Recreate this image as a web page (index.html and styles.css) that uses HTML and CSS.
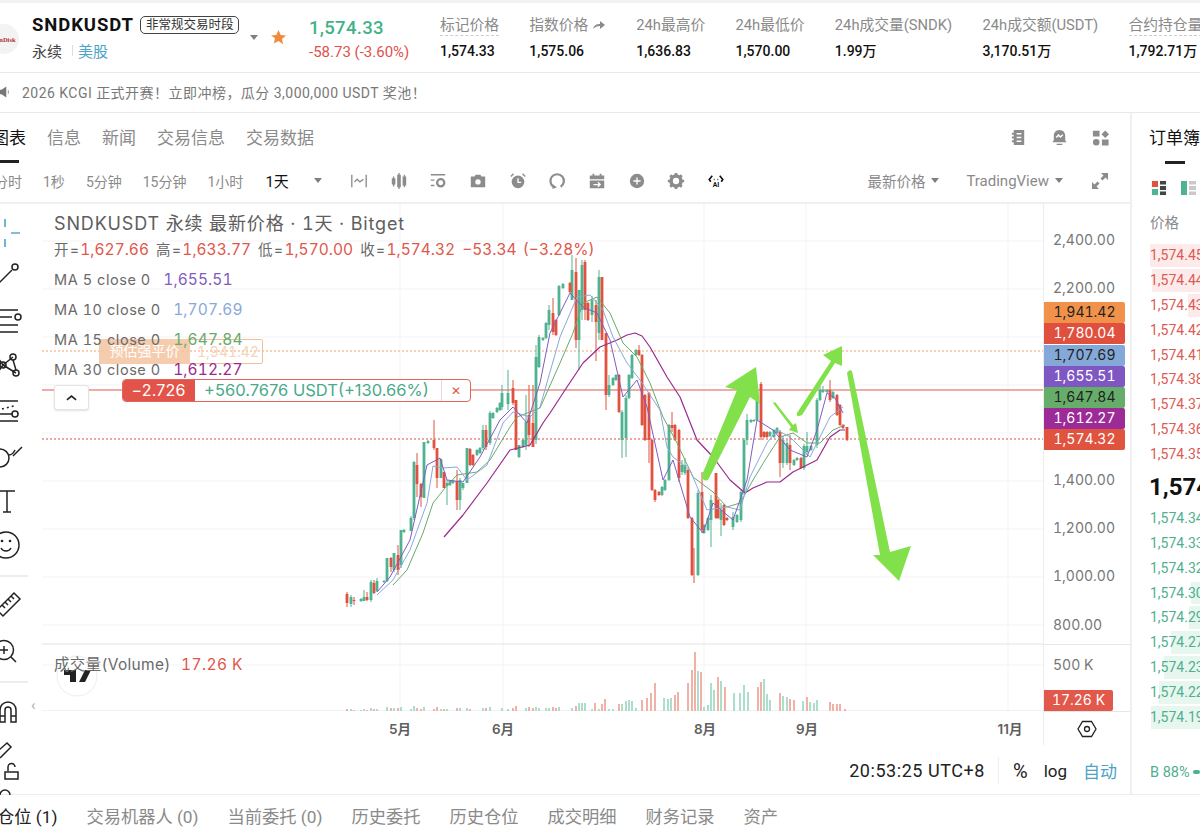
FILE: index.html
```html
<!DOCTYPE html>
<html lang="zh-CN">
<head>
<meta charset="utf-8">
<title>SNDKUSDT</title>
<link rel="stylesheet" href="styles.css">
</head>
<body>
<div class="page">
  <header class="ticker">
    <div class="logo"><span>SanDisk</span></div>
    <div class="symbol">
      <div class="symbol-top"><strong>SNDKUSDT</strong><span class="badge">非常规交易时段</span></div>
      <div class="symbol-sub"><span>永续</span><i></i><a>美股</a></div>
    </div>
    <span class="caret symbol-caret"></span>
    <svg class="star" viewBox="0 0 16 16"><path d="M8 0l2.3 5.2 5.7.6-4.3 3.7 1.3 5.6L8 11.6l-5 2.9 1.300-5.600L0 5.800l5.700-.6z"/></svg>
    <div class="last">
      <b>1,574.33</b>
      <span>-58.73 (-3.60%)</span>
    </div>
    <div class="stats">
      <div class="stat"><label class="dashed">标记价格</label><span>1,574.33</span></div>
      <div class="stat"><label>指数价格 <svg class="go" viewBox="0 0 14 10"><path d="M1 9c1-4 4-5 7-5V1l5 4-5 4V6C5 6 3 7 1 9z"/></svg></label><span>1,575.06</span></div>
      <div class="stat"><label>24h最高价</label><span>1,636.83</span></div>
      <div class="stat"><label>24h最低价</label><span>1,570.00</span></div>
      <div class="stat"><label>24h成交量(SNDK)</label><span>1.99万</span></div>
      <div class="stat"><label>24h成交额(USDT)</label><span>3,170.51万</span></div>
      <div class="stat"><label class="dashed">合约持仓量</label><span>1,792.71万</span></div>
    </div>
  </header>

  <div class="notice">
    <svg class="horn" viewBox="0 0 14 16"><path d="M-4 5h6l6-4v14l-6-4h-6z"/><path d="M10 5c1.500 1 1.500 5 0 6z"/></svg>
    <span>2026 KCGI 正式开赛！立即冲榜，瓜分 3,000,000 USDT 奖池！</span>
  </div>

  <div class="market">
    <section class="chart-col">
      <nav class="tabs">
        <a class="on">图表</a><a>信息</a><a>新闻</a><a>交易信息</a><a>交易数据</a>
        <div class="tab-icons">
          <svg viewBox="0 0 20 20"><path class="i-fill" d="M5 2h11v16H5zM3 5h3v2H3zM3 9h3v2H3zM3 13h3v2H3z"/><path class="i-cut" d="M8 6h5M8 10h5M8 14h5"/></svg>
          <svg viewBox="0 0 20 20"><path class="i-fill" d="M10 2c4 0 6 3 6 6v5l1.500 2h-15L4 13V8c0-3 2-6 6-6zM7 16.500h6V18H7z"/><path class="i-cut" d="M6.500 10l2.500-2.500 2 2 2.500-2.500"/></svg>
          <svg viewBox="0 0 20 20"><path class="i-fill" d="M2 3h7v6H2zM15 2.500l4 4-4 4-4-4zM5.500 11.500a3.500 3.500 0 1 1 0 7 3.500 3.500 0 0 1 0-7zM11.500 12h7v6.500h-7z"/></svg>
        </div>
      </nav>

      <div class="intervals">
        <a>分时</a><a>1秒</a><a>5分钟</a><a>15分钟</a><a>1小时</a><a class="on">1天</a>
        <span class="caret int-caret"></span>
        <div class="tools">
          <svg viewBox="0 0 20 20"><path class="i-line" d="M2 3v14M18 3v14M5 11l3-3 3 3 4-3"/></svg>
          <svg viewBox="0 0 20 20"><path class="i-fill" d="M2 7h4v7H2zM8 3h4v14H8zM14 5h4v10h-4z"/><path class="i-line" d="M4 5v11M10 1v18M16 3v14"/></svg>
          <svg viewBox="0 0 20 20"><path class="i-line" d="M2 3h16M2 9h4M2 15h4"/><circle class="i-ring" cx="13" cy="12" r="4"/></svg>
          <svg viewBox="0 0 20 20"><path class="i-fill" d="M2 5h4l1.500-2h5L14 5h4v12H2z"/><circle class="i-hole" cx="10" cy="11" r="3"/></svg>
          <svg viewBox="0 0 20 20"><circle class="i-fill" cx="10" cy="11" r="7"/><path class="i-cut" d="M10 7v4.500h3.500"/><path class="i-line" d="M2 5l3-3M18 5l-3-3"/></svg>
          <svg viewBox="0 0 20 20"><path class="i-line i-thick" d="M6.500 16.500A7.500 7.500 0 1 1 14 16.400"/><path class="i-fill" d="M5 13.500l5 3.500-5 2z"/></svg>
          <svg viewBox="0 0 20 20"><path class="i-fill" d="M2 4h16v4H2zM2 9.500h16V18H2zM5 2h2v3H5zM13 2h2v3h-2z"/><path class="i-cut" d="M6 14h7M11 11.500l2.500 2.500-2.500 2.500"/></svg>
          <svg viewBox="0 0 20 20"><circle class="i-fill" cx="10" cy="10" r="8"/><path class="i-cut" d="M6 10h8M10 6v8"/></svg>
          <svg viewBox="0 0 20 20"><circle class="i-gear" cx="10" cy="10" r="5.500"/><path class="i-teeth" d="M10 1v18M1 10h18M3.600 3.600l12.800 12.800M16.400 3.600L3.600 16.400"/></svg>
          <svg class="ai" viewBox="0 0 24 20"><path class="i-dark" d="M7 3L3 8l2 3M17 3l4 5-2 3M9 8h1M14 8h1"/><text x="12" y="18">AI</text></svg>
        </div>
        <div class="int-right">
          <a>最新价格</a><span class="caret"></span>
          <a class="tv">TradingView</a><span class="caret"></span>
          <svg class="expand" viewBox="0 0 20 20"><path class="i-fill" d="M11 2h7v7l-2.500-2.500-3 3-2-2 3-3zM9 18H2v-7l2.500 2.500 3-3 2 2-3 3z"/></svg>
        </div>
      </div>

      <div class="chart-body">
        <aside class="drawbar">
          <svg viewBox="0 204 42 591" width="42" height="591">
            <path class="t-blue" d="M5 219v8M5 239v8M-5 233H-1M11 233h9"/>
            <path class="t" d="M-1 283l13-13"/><circle class="t" cx="15" cy="267" r="3"/>
            <path class="t" d="M-2 310h20M-2 325h20M-2 332h20M-2 317h14"/><circle class="t" cx="18" cy="317" r="3"/>
            <path class="t" d="M-2 358l5 7M-2 372l5-7M3 365l10-8M3 365l13 8M13 360l3 10"/><circle class="t" cx="3" cy="365" r="3"/><circle class="t" cx="13" cy="357" r="3"/><circle class="t" cx="16" cy="373" r="3"/>
            <path class="t" d="M-2 401h20M-2 414h14M-2 421h20"/><path class="t t-dash" d="M2 409l12-3"/><circle class="t" cx="15" cy="414" r="3"/>
            <circle class="t" cx="0" cy="458" r="9"/><path class="t" d="M9 455c3 0 5-3 6-5M13 456l9-9"/>
            <path class="t" d="M-2 491h17M7 491v21M3 512h8"/>
            <circle class="t" cx="6" cy="545" r="13"/><circle class="t-dot" cx="2" cy="541" r="1.300"/><circle class="t-dot" cx="10" cy="541" r="1.300"/><path class="t" d="M1 548c2 4 8 4 10 0"/>
            <path class="t-soft" d="M0 576h28M0 682h28"/>
            <path class="t" d="M-3 610l17-17 6 6-17 17zM2 605l3 3M5 602l3 3M8 599l3 3M11 596l3 3"/>
            <circle class="t" cx="4" cy="650" r="9.500"/><path class="t" d="M0 650h8M4 646v8M11 657l5 5"/>
            <path class="t" d="M0 722v-12a8 8 0 0 1 16 0v12h-5v-12a3 3 0 0 0-6 0v12zM0 716h5M11 716h5"/>
            <path class="t" d="M-1 750l8-7 4 4-11 11M5 772h13v7H5z"/><path class="t" d="M8 771v-4a3.500 3.500 0 0 1 7 0"/>
            <path class="t" d="M0 795a5 5 0 0 1 10 0"/>
          </svg>
          <span class="hide-bar">‹</span>
        </aside>

        <div class="plot">
          <svg class="canvas" viewBox="42 204 1001 507" width="1001" height="507">
            <path class="grid" d="M42 241H1043M42 289H1043M42 337H1043M42 385H1043M42 433H1043M42 481H1043M42 529H1043M42 577H1043M42 625H1043M42 665H1043M400 204V711M503 204V711M704 204V711M806 204V711M1008 204V711"/>
            <path class="pane" d="M42 644H1043M42 711H1043"/>
            <path class="level-o" d="M42 351H1043"/>
            <path class="level-r" d="M42 390H1043"/>
            <path class="level-d" d="M42 439H1043"/>

            <path class="vol-g" d="M351 711v-2M361 711v-1M364 711v-2M371 711v-3M377 711v-2M387 711v-4M394 711v-3M401 711v-4M411 711v-2M414 711v-5M424 711v-4M441 711v-2M447 711v-2M460 711v-3M467 711v-3M483 711v-3M490 711v-4M502 711v-3M508 711v-2M526 711v-3M536 711v-4M539 711v-3M546 711v-3M549 711v-3M559 711v-4M572 711v-3M579 711v-8M582 711v-8M585 711v-8M592 711v-2M599 711v-2M609 711v-2M613 711v-2M622 711v-7M626 711v-10M629 711v-11M632 711v-10M636 711v-3M664 711v-13M668 711v-12M671 711v-13M698 711v-40M704 711v-4M708 711v-6M711 711v-28M714 711v-21M721 711v-30M734 711v-18M740 711v-18M744 711v-26M748 711v-19M764 711v-32M767 711v-17M770 711v-11M783 711v-15M787 711v-14M803 711v-10M810 711v-9M814 711v-8M817 711v-11"/>
            <path class="vol-r" d="M347 711v-2M354 711v-1M367 711v-1M374 711v-2M391 711v-3M398 711v-3M417 711v-3M421 711v-2M434 711v-2M437 711v-4M444 711v-2M457 711v-3M470 711v-2M486 711v-3M513 711v-3M516 711v-5M529 711v-4M533 711v-3M553 711v-4M556 711v-3M576 711v-5M595 711v-8M602 711v-7M605 711v-12M619 711v-7M642 711v-11M647 711v-13M651 711v-18M655 711v-28M675 711v-16M678 711v-19M688 711v-28M692 711v-41M695 711v-59M701 711v-39M718 711v-34M725 711v-24M758 711v-24M761 711v-29M780 711v-18M790 711v-12M794 711v-11M807 711v-14M830 711v-9M833 711v-7M837 711v-7M840 711v-7M845 711v-2"/>

            <path class="wick-g" d="M351 595V607M361 598V602M364 590V601M371 580V602M377 578V592M384 580V583M387 558V582M394 553V572M401 530V568M404 529V533M411 516V531M414 461V520M424 442V498M428 440V444M441 459V478M447 480V505M450 480V486M453 480V484M460 478V510M463 483V490M467 448V483M477 449V456M480 447V454M483 425V450M490 411V445M493 412V419M497 407V413M500 402V411M502 385V410M508 370V410M519 445V458M523 439V448M526 395V450M536 345V444M539 335V368M543 337V341M546 322V339M549 305V330M559 285V316M563 283V289M572 255V300M579 290V370M582 260V320M592 296V322M599 270V340M609 375V397M613 377V386M616 374V381M622 410V458M626 395V457M629 374V399M632 354V379M636 349V356M662 486V496M665 479V491M669 424V481M682 460V475M685 458V475M698 490V576M704 524V534M708 517V531M711 495V547M721 503V536M733 512V530M737 514V523M741 490V522M744 438V495M747 414V445M751 419V423M754 419V422M757 399V421M770 431V437M774 429V438M777 427V434M783 436V468M787 440V465M794 459V466M797 457V461M804 444V470M807 432V455M811 445V451M817 398V448M820 386V401M823 386V393M827 389V393M833 391V399"/>
            <path class="body-g" d="M351 597V604M361 599V601M364 597V601M371 582V600M377 581V591M384 581V582M387 558V581M394 553V570M401 530V565M404 530V532M411 518V531M414 462V518M424 442V498M428 441V443M441 459V478M447 483V486M450 481V485M453 481V483M460 480V500M463 483V488M467 448V483M477 450V455M480 448V453M483 430V448M490 413V443M493 413V418M497 408V412M500 403V410M502 393V407M508 393V404M519 445V457M523 440V447M526 422V445M536 357V440M539 337V367M543 338V340M546 323V338M549 310V325M559 286V315M563 284V288M572 270V300M579 290V340M582 265V310M592 300V315M599 277V333M609 385V395M613 378V385M616 375V380M622 412V440M626 398V438M629 375V398M632 355V378M636 350V355M662 487V495M665 480V490M669 425V480M682 465V472M685 465V473M698 493V575M704 525V533M708 518V530M711 500V520M721 510V520M733 517V527M737 515V522M741 492V520M744 440V492M747 420V440M751 420V422M754 420V421M757 400V420M770 432V436M774 430V437M777 428V433M783 440V463M787 443V463M794 460V465M797 458V460M804 446V468M807 446V452M811 446V450M817 400V445M820 390V400M823 390V392M827 390V392M833 392V398"/>
            <path class="wick-r" d="M347 592V607M354 597V605M367 592V601M374 580V594M391 557V572M398 545V575M417 453V497M421 483V507M434 420V450M437 448V488M444 472V488M457 470V510M470 448V466M473 454V466M486 425V450M513 380V405M516 400V450M529 385V447M533 385V447M553 298V335M556 319V336M570 282V293M576 258V348M585 260V320M588 302V321M596 300V361M602 277V340M606 333V410M619 374V413M639 345V356M642 354V426M645 394V441M649 392V463M652 439V491M655 489V502M659 491V496M672 412V432M675 424V441M679 429V482M688 469V519M692 517V576M694 548V583M702 472V533M716 473V519M718 499V519M724 504V526M727 517V521M761 382V440M764 431V438M767 431V438M780 430V477M790 435V470M801 457V469M830 380V402M837 394V416M840 404V426M843 424V429M847 427V441"/>
            <path class="body-r" d="M347 594V603M354 600V601M367 597V600M374 583V593M391 558V567M398 555V570M417 465V484M421 484V497M434 440V448M437 448V478M444 472V488M457 481V500M470 449V465M473 455V465M486 430V447M513 388V403M516 400V450M529 415V435M533 423V447M553 313V332M556 320V335M570 283V292M576 272V340M585 262V310M588 303V320M596 305V322M602 277V340M606 333V395M619 375V412M639 350V355M642 355V425M645 395V440M649 393V440M652 440V490M655 490V500M659 492V495M672 425V428M675 425V440M679 430V478M688 470V518M692 518V575M702 492V530M716 473V518M718 500V518M724 505V525M727 518V520M761 384V437M764 432V437M767 432V437M780 432V463M790 445V463M801 458V468M830 390V400M837 395V415M840 405V425M843 425V428M847 427V440"/>

            <path class="ma ma30" d="M444 537L463 515L487 483L510 450L530 445L543 423L550 413L567 387L583 363L600 347L617 340L627 335L635 333L642 336L650 347L667 377L680 397L697 440L713 457L730 480L745 493L753 488L767 482L780 482L793 472L817 460L830 437L840 430L845 430"/>
            <path class="ma ma15" d="M393 585L407 570L423 533L433 503L445 488L457 475L477 472L490 460L510 427L517 417L540 408L560 363L573 333L583 303L597 297L610 313L623 343L637 357L650 383L663 417L677 443L693 477L713 492L727 507L740 503L753 480L767 457L780 437L793 433L807 443L820 443L833 430L845 425"/>
            <path class="ma ma10" d="M377 595L393 580L410 550L427 503L433 466L443 468L457 467L467 480L487 465L503 423L513 412L530 417L540 407L560 337L577 297L590 295L603 310L613 337L627 363L640 380L660 410L667 447L673 457L690 470L707 510L727 507L740 510L750 477L767 443L777 430L790 437L810 457L830 417L843 407"/>
            <path class="ma ma5" d="M377 592L390 577L410 540L427 465L440 458L447 480L463 482L480 457L500 420L513 407L527 423L540 383L550 333L570 293L583 307L597 313L610 340L623 397L637 380L647 407L663 480L673 460L690 517L703 533L713 503L733 520L747 480L757 420L773 430L790 450L807 457L817 430L827 393L835 398L843 413"/>

            <path class="pen" d="M702 475L737 390L725 387L756 367L760 404L750 397L708 480Q702 482 702 475Z"/>
            <path class="pen" d="M797 413L831 361L823 355L842 346L842 366L835 363L802 415Q796 418 797 413Z"/>
            <path class="pen" d="M773 403L775 402L793 425L796 423L798 433L789 430L791 427Z"/>
            <path class="pen" d="M847 373Q849 369 852 371L890 552L911 546L899 581L873 555L880 555Z"/>

            <circle class="tv-ring" cx="77" cy="676" r="20"/>
            <path class="tv-mark" d="M64 670H76V682H70V675H64ZM85 670H91L85 682H79Z"/>
          </svg>

          <div class="liq"><span class="liq-l">预估强平价</span><span class="liq-v">1,941.42</span></div>

          <div class="legend">
            <div class="l-title">SNDKUSDT 永续 最新价格 · 1天 · Bitget</div>
            <div class="l-ohlc">开=<em>1,627.66</em> 高=<em>1,633.77</em> 低=<em>1,570.00</em> 收=<em>1,574.32</em> <em>−53.34 (−3.28%)</em></div>
            <div class="l-ma">MA 5 close 0 <span class="c5">1,655.51</span></div>
            <div class="l-ma">MA 10 close 0 <span class="c10">1,707.69</span></div>
            <div class="l-ma">MA 15 close 0 <span class="c15">1,647.84</span></div>
            <div class="l-ma">MA 30 close 0 <span class="c30">1,612.27</span></div>
          </div>

          <div class="pos"><b>−2.726</b><span class="pos-pnl">+560.7676 USDT(+130.66%)</span><span class="pos-x">✕</span></div>
          <button class="collapse"><svg viewBox="0 0 12 8"><path d="M1 6l5-4 5 4"/></svg></button>
          <div class="vol-legend">成交量(Volume) <em>17.26 K</em></div>
        </div>

        <div class="price-axis">
          <span class="p" style="top:36px">2,400.00</span>
          <span class="p" style="top:84px">2,200.00</span>
          <span class="p" style="top:276px">1,400.00</span>
          <span class="p" style="top:324px">1,200.00</span>
          <span class="p" style="top:372px">1,000.00</span>
          <span class="p" style="top:421px">800.00</span>
          <span class="p" style="top:461px">500 K</span>
          <span class="tag t-or" style="top:98px">1,941.42</span>
          <span class="tag t-re" style="top:119px">1,780.04</span>
          <span class="tag t-bl" style="top:141px">1,707.69</span>
          <span class="tag t-pu" style="top:162px">1,655.51</span>
          <span class="tag t-gr" style="top:183px">1,647.84</span>
          <span class="tag t-ma" style="top:204px">1,612.27</span>
          <span class="tag t-la" style="top:225px">1,574.32</span>
          <span class="tag t-vo" style="top:486px">17.26 K</span>
          <i class="axis-line l1"></i><i class="axis-line l2"></i>
          <svg class="hex" viewBox="0 0 20 20"><path d="M5.500 2.500h9L19 10l-4.500 7.500h-9L1 10z"/><circle cx="10" cy="10" r="2.500"/></svg>
        </div>

        <div class="time-axis">
          <span style="left:358px">5月</span>
          <span style="left:461px">6月</span>
          <span style="left:663px">8月</span>
          <span style="left:765px">9月</span>
          <span style="left:968px">11月</span>
        </div>
      </div>

      <footer class="chart-foot">
        <span class="clock">20:53:25 UTC+8</span><i></i><a class="pct">%</a><a>log</a><a class="auto">自动</a>
      </footer>
    </section>

    <aside class="book">
      <div class="book-head">订单簿</div>
      <div class="book-bar"></div>
      <div class="book-modes">
        <svg viewBox="0 0 16 16"><rect class="m-bg" width="16" height="16" rx="2"/><path class="m-r" d="M1 1h6v6H1z"/><path class="m-g" d="M1 9h6v6H1z"/><path class="m-k" d="M9 1h6v3.500H9zM9 6h6v4H9zM9 11.500h6V15H9z"/></svg>
        <svg viewBox="0 0 16 16"><path class="m-g" d="M1 1h6v14H1z"/><path class="m-s" d="M9 1h7v3.500H9zM9 6h7v4H9zM9 11.500h7V15H9z"/></svg>
      </div>
      <div class="book-label">价格</div>
      <div class="rows asks">
        <div class="row"><i style="width:51px"></i><span>1,574.45</span></div>
        <div class="row"><i style="width:49px"></i><span>1,574.44</span></div>
        <div class="row"><i style="width:13px"></i><span>1,574.43</span></div>
        <div class="row"><span>1,574.42</span></div>
        <div class="row"><span>1,574.41</span></div>
        <div class="row"><span>1,574.38</span></div>
        <div class="row"><span>1,574.37</span></div>
        <div class="row"><span>1,574.36</span></div>
        <div class="row"><span>1,574.35</span></div>
      </div>
      <div class="mid">1,574.33</div>
      <div class="rows bids">
        <div class="row"><span>1,574.34</span></div>
        <div class="row"><span>1,574.33</span></div>
        <div class="row"><span>1,574.32</span></div>
        <div class="row"><i style="width:10px"></i><span>1,574.30</span></div>
        <div class="row"><i style="width:12px"></i><span>1,574.29</span></div>
        <div class="row"><i style="width:30px"></i><span>1,574.27</span></div>
        <div class="row"><i style="width:37px"></i><span>1,574.23</span></div>
        <div class="row"><i style="width:42px"></i><span>1,574.22</span></div>
        <div class="row"><i style="width:50px"></i><span>1,574.19</span></div>
      </div>
      <div class="ratio"><span>B 88%</span><i></i></div>
    </aside>
  </div>

  <nav class="bottom-tabs">
    <a class="on">仓位 (1)</a><a>交易机器人 (0)</a><a>当前委托 (0)</a><a>历史委托</a><a>历史仓位</a><a>成交明细</a><a>财务记录</a><a>资产</a>
  </nav>
</div>
</body>
</html>
```

FILE: styles.css
```css
* { box-sizing: border-box; }
html, body { margin: 0; padding: 0; background: #fff; }
body { font-family: Roboto, "Noto Sans CJK SC", sans-serif; color: #1a1a1a; }
a { color: inherit; text-decoration: none; }
.page { width: 1200px; height: 829px; overflow: hidden; display: flex; flex-direction: column; border-top: 3px solid #f2f2f2; }

/* ticker */
.ticker { height: 70px; flex: none; display: flex; align-items: center; border-bottom: 1px solid #e9e9e9; }
.logo { width: 30px; height: 30px; border-radius: 50%; background: #f3f3f3; margin: 21px 0 0 -11px; flex: none; display: flex; align-items: center; justify-content: center; overflow: hidden; align-self: flex-start; }
.logo span { font: bold 6.500px "Liberation Serif", serif; color: #b5302a; }
.symbol { margin-left: 13px; flex: none; width: 218px; }
.symbol-top { display: flex; align-items: center; gap: 6px; height: 22px; }
.symbol-top strong { font-size: 18.500px; font-weight: 700; letter-spacing: .9px; color: #111; }
.badge { font-size: 12.500px; line-height: 16px; padding: 0 5px; border: 1px solid #444; border-radius: 5px; color: #333; }
.symbol-sub { display: flex; align-items: center; font-size: 15px; margin-top: 3px; color: #444; height: 22px; }
.symbol-sub i { width: 1px; height: 11px; background: #ddd; margin: 0 5px 0 10px; }
.symbol-sub a { color: #4ba3c7; }
.caret { display: inline-block; width: 0; height: 0; border: 4px solid transparent; border-top: 5px solid #7f7f7f; border-bottom: 0; flex: none; }
.star { width: 15px; height: 15px; margin-left: 13px; fill: #f08b3b; flex: none; }
.last { margin-left: 23px; width: 131px; flex: none; display: flex; flex-direction: column; gap: 3px; padding-top: 1px; }
.last b { font-size: 18.500px; line-height: 24px; color: #3fb287; font-weight: 500; letter-spacing: .3px; }
.last span { font-size: 15px; line-height: 18px; color: #e0514c; }
.stats { display: flex; gap: 30.300px; flex: none; }
.stat { display: flex; flex-direction: column; gap: 7px; white-space: nowrap; }
.stat label { font-size: 14.750px; line-height: 20px; color: #8a8a8a; }
.stat label.dashed { border-bottom: 1px dashed #ccc; margin-bottom: -1px; }
.stat span { font-size: 14px; line-height: 18px; color: #111; font-weight: 500; }
.go { width: 14px; height: 10px; fill: #8a8a8a; }

/* notice */
.notice { height: 40px; flex: none; display: flex; align-items: center; font-size: 14px; color: #787878; border-bottom: 1px solid #e9e9e9; letter-spacing: .47px; padding-bottom: 2px; }
.horn { width: 11px; height: 14px; fill: #777; margin-right: 11px; }

/* market */
.market { flex: none; height: 682px; display: flex; border-bottom: 1px solid #ececec; }
.chart-col { width: 1130px; flex: none; display: flex; flex-direction: column; }

.tabs { height: 50px; flex: none; display: flex; align-items: flex-start; gap: 21px; margin-left: -8px; font-size: 17px; color: #8a8a8a; padding-top: 13px; }
.tabs a { line-height: 24px; position: relative; }
.tabs a.on { color: #111; }
.tabs a.on::after { content: ""; position: absolute; left: 8px; right: 7px; bottom: -13px; height: 3px; background: #222; }
.tab-icons { margin-left: auto; display: flex; gap: 22px; margin-top: 2px; margin-right: 20px; }
.tab-icons svg { width: 19px; height: 19px; }
.i-fill { fill: #8c8c8c; }
.i-cut { fill: none; stroke: #fff; stroke-width: 1.500; }
.i-line { fill: none; stroke: #8c8c8c; stroke-width: 1.500; }
.i-thick { stroke-width: 2.400; }
.i-ring { fill: none; stroke: #8c8c8c; stroke-width: 2.500; }
.i-hole { fill: #fff; stroke: none; }
.i-gear { fill: none; stroke: #8c8c8c; stroke-width: 4; }
.i-teeth { stroke: #8c8c8c; stroke-width: 3; stroke-dasharray: 3 12 3 0; fill: none; }
.i-dark { fill: none; stroke: #111; stroke-width: 2.200; }
.ai text { font: bold 9px Roboto, sans-serif; fill: #111; text-anchor: middle; }

.intervals { height: 41px; flex: none; display: flex; align-items: center; gap: 21px; margin-left: -6px; font-size: 14px; color: #8a8a8a; border-bottom: 2px solid #f0f0f0; padding-bottom: 4px; }
.intervals > a.on { color: #111; font-size: 15px; margin-left: 1px; }
.int-caret { margin-left: 4px; }
.tools { display: flex; gap: 21.700px; margin-left: 7px; }
.tools svg { width: 18px; height: 18px; }
.int-right { margin-left: auto; display: flex; align-items: center; gap: 6px; font-size: 14.500px; margin-right: 20px; }
.int-right .tv { margin-left: 21px; font-size: 15px; }
.expand { width: 20px; height: 20px; margin-left: 21px; }

/* chart */
.chart-body { position: relative; flex: none; height: 541px; display: grid; grid-template-columns: 42px 1001px 87px; grid-template-rows: 507px 34px; font-feature-settings: "tnum"; }
.drawbar { grid-row: 1 / span 2; position: relative; }
.drawbar svg { display: block; overflow: hidden; }
.t { fill: none; stroke: #222; stroke-width: 1.500; }
.t-blue { fill: none; stroke: #5aa9cb; stroke-width: 1.700; }
.t-dash { stroke-dasharray: 2 3; }
.t-dot { fill: #222; }
.t-soft { fill: none; stroke: #e8e8e8; stroke-width: 1.500; }
.hide-bar { position: absolute; left: 31px; top: 492px; font-size: 15px; color: #aaa; }

.plot { position: relative; overflow: hidden; }
.canvas { display: block; }
.grid { stroke: #f3f3f3; stroke-width: 1; fill: none; }
.pane { stroke: #e3e3e3; stroke-width: 1; fill: none; }
.level-o { stroke: #f0a36c; stroke-width: 1; stroke-dasharray: 2 2; fill: none; }
.level-r { stroke: #dd5a50; stroke-width: 1.200; fill: none; }
.level-d { stroke: #dd4a45; stroke-width: 1; stroke-dasharray: 2 2; fill: none; }
.vol-g { stroke: #a4dbc6; stroke-width: 1.800; fill: none; }
.vol-r { stroke: #efa99e; stroke-width: 1.800; fill: none; }
.wick-g { stroke: #4fb391; stroke-width: 1; fill: none; }
.body-g { stroke: #4fb391; stroke-width: 2.800; fill: none; }
.wick-r { stroke: #e0523f; stroke-width: 1; fill: none; }
.body-r { stroke: #e0523f; stroke-width: 2.800; fill: none; }
.ma { fill: none; stroke-width: 1; stroke-linejoin: round; }
.ma30 { stroke: #9a2a8e; stroke-width: 1.200; }
.ma15 { stroke: #68ab6c; }
.ma10 { stroke: #8aa9d8; }
.ma5 { stroke: #7f5cc2; }
.pen { fill: #82e14a; }
.tv-ring { fill: #fff; stroke: #eeeeee; stroke-width: 1; }
.tv-mark { fill: #222; }

.legend { position: absolute; left: 12px; top: 7px; color: #6a6a6a; font-family: Inter, "Noto Sans CJK SC", sans-serif; white-space: nowrap; }
.legend em, .vol-legend em { font-style: normal; color: #e0574c; }
.l-title { font-size: 18px; line-height: 26px; height: 26px; color: #5e5e5e; letter-spacing: .85px; }
.l-ohlc { font-size: 14.500px; line-height: 22px; margin-top: 2px; word-spacing: 2px; letter-spacing: 1.200px; }
.l-ohlc em { font-size: 15.500px; letter-spacing: 0; }
.l-ma { font-size: 14.500px; line-height: 30px; letter-spacing: .55px; height: 30px; }
.l-ohlc + .l-ma { margin-top: 4px; }
.l-ma span { margin-left: 8px; font-size: 15.500px; letter-spacing: .1px; }
.c5 { color: #7f5cc2; } .c10 { color: #8aa9d8; } .c15 { color: #68ab6c; } .c30 { color: #9a2a8e; }

.liq { position: absolute; left: 57px; top: 135px; height: 25px; width: 164px; display: flex; border: 1px solid #f2b98e; border-radius: 2px; font-size: 14px; line-height: 23px; opacity: .9; }
.liq-l { width: 91px; background: #f6c7a6; color: #fff; text-align: center; margin: -1px 0 -1px -1px; line-height: 25px; }
.liq-v { color: #f8cfb2; padding-left: 7px; font-family: Inter, sans-serif; font-size: 14px; }

.pos { position: absolute; left: 80px; top: 175px; width: 349px; height: 23px; display: flex; align-items: center; background: #fff; border: 1px solid #e2665c; border-radius: 4px; font: 16px/21px Inter, sans-serif; overflow: hidden; letter-spacing: .2px; }
.pos b { width: 73px; height: 23px; background: #e2544a; color: #fff; font-weight: 400; text-align: center; line-height: 22px; margin: -1px 0 -1px -1px; flex: none; }
.pos-pnl { color: #4aa98a; padding-left: 9px; flex: 1; font-size: 16.500px; white-space: nowrap; letter-spacing: 0; }
.pos-x { width: 29px; height: 21px; border-left: 1px solid #f2d5d2; text-align: center; color: #e2544a; font-size: 12px; flex: none; }

.collapse { position: absolute; left: 12px; top: 181px; width: 35px; height: 25px; padding: 0; background: #fff; border: 1px solid #e4e4e4; border-radius: 3px; box-shadow: 0 1px 2px rgba(0,0,0,.12); display: flex; align-items: center; justify-content: center; }
.collapse svg { width: 11px; height: 8px; fill: none; stroke: #222; stroke-width: 1.800; }
.vol-legend { position: absolute; left: 12px; top: 451px; font: 15.500px/20px Inter, "Noto Sans CJK SC", sans-serif; font-feature-settings: "tnum"; color: #6a6a6a; letter-spacing: .3px; }
.vol-legend em { margin-left: 6px; letter-spacing: .4px; }

.price-axis { position: relative; grid-row: 1 / span 2; grid-column: 3; border-left: 1px solid #ececec; height: 541px; }
.p { position: absolute; left: 9px; transform: translateY(-10px); font: 14px/20px Inter, sans-serif; font-feature-settings: "tnum"; color: #777; white-space: nowrap; }
.tag { position: absolute; left: 0; width: 81px; height: 20.500px; border-radius: 0 2px 2px 0; font: 14px/20px Inter, sans-serif; font-feature-settings: "tnum"; text-align: center; color: #fff; }
.t-or { background: #f2924a; color: #222; }
.t-re { background: #e0503f; }
.t-bl { background: #84a9d8; color: #222; }
.t-pu { background: #7e57c2; }
.t-gr { background: #66ad6a; color: #222; }
.t-ma { background: #9c2a97; }
.t-la { background: #e0533f; }
.t-vo { background: #e2584a; width: 69px; height: 21px; }
.axis-line { position: absolute; left: 0; width: 87px; height: 1px; background: #e6e6e6; }
.l1 { top: 440px; } .l2 { top: 507px; }
.hex { position: absolute; left: 33px; top: 515px; width: 20px; height: 20px; fill: none; stroke: #222; stroke-width: 1.300; }

.time-axis { grid-column: 2; grid-row: 2; position: relative; }
.time-axis span { position: absolute; top: 8px; transform: translateX(-50%); font: 600 13.500px/20px Inter, "Noto Sans CJK SC", sans-serif; color: #5f5f5f; white-space: nowrap; }

.chart-foot { height: 47px; flex: none; display: flex; align-items: center; justify-content: flex-end; padding: 4px 13px 0 0; font-size: 17px; gap: 16px; color: #222; }
.clock { font-size: 18px; letter-spacing: .55px; }
.chart-foot i { width: 1px; height: 27px; background: #eee; margin: 0 -2px 0 -3px; }
.chart-foot .pct { font-size: 20px; }
.chart-foot .auto { color: #4ba3c7; }

/* order book */
.book { flex: 1; border-left: 2px solid #efefef; overflow: hidden; padding-left: 18px; white-space: nowrap; position: relative; }
.book-head { font-size: 17px; line-height: 24px; margin: 13px 0 0 -1px; color: #111; width: 60px; }
.book-bar { width: 20px; height: 3px; background: #222; margin: 11px 0 0 15px; }
.book-modes { display: flex; gap: 13px; margin: 16px 0 0 1px; height: 16px; }
.book-modes svg { width: 16px; height: 16px; flex: none; }
.m-bg { fill: #f3f8f6; } .m-r { fill: #e0523f; } .m-g { fill: #4fb391; } .m-k { fill: #444; } .m-s { fill: #c9c9c9; }
.book-label { font-size: 14.500px; line-height: 20px; margin-top: 18px; color: #8a8a8a; }
.rows { margin-left: -1px; width: 52px; }
.asks { margin-top: 9px; }
.row { position: relative; height: 24.875px; font-size: 14px; line-height: 24.875px; }
.row i { position: absolute; right: 0; top: 1px; bottom: 1px; }
.row span { position: relative; padding-left: 1px; }
.asks .row { color: #dd5a55; }
.asks .row i { background: #fcebea; }
.bids .row { color: #4fb08f; }
.bids .row i { background: #e8f6f0; }
.mid { font-size: 24px; font-weight: 700; line-height: 30px; margin: 5px 0 4px -1px; color: #111; }
.ratio { display: flex; align-items: center; gap: 3px; margin-top: 34px; font-size: 14.500px; color: #4fb08f; }
.ratio i { width: 40px; height: 4px; background: #4fb08f; border-radius: 2px; }

/* bottom */
.bottom-tabs { height: 35px; flex: none; display: flex; align-items: center; gap: 29px; font-size: 17.250px; color: #8a8a8a; white-space: nowrap; padding-top: 5px; margin-left: -3px; }
.bottom-tabs a.on { color: #222; }
```
